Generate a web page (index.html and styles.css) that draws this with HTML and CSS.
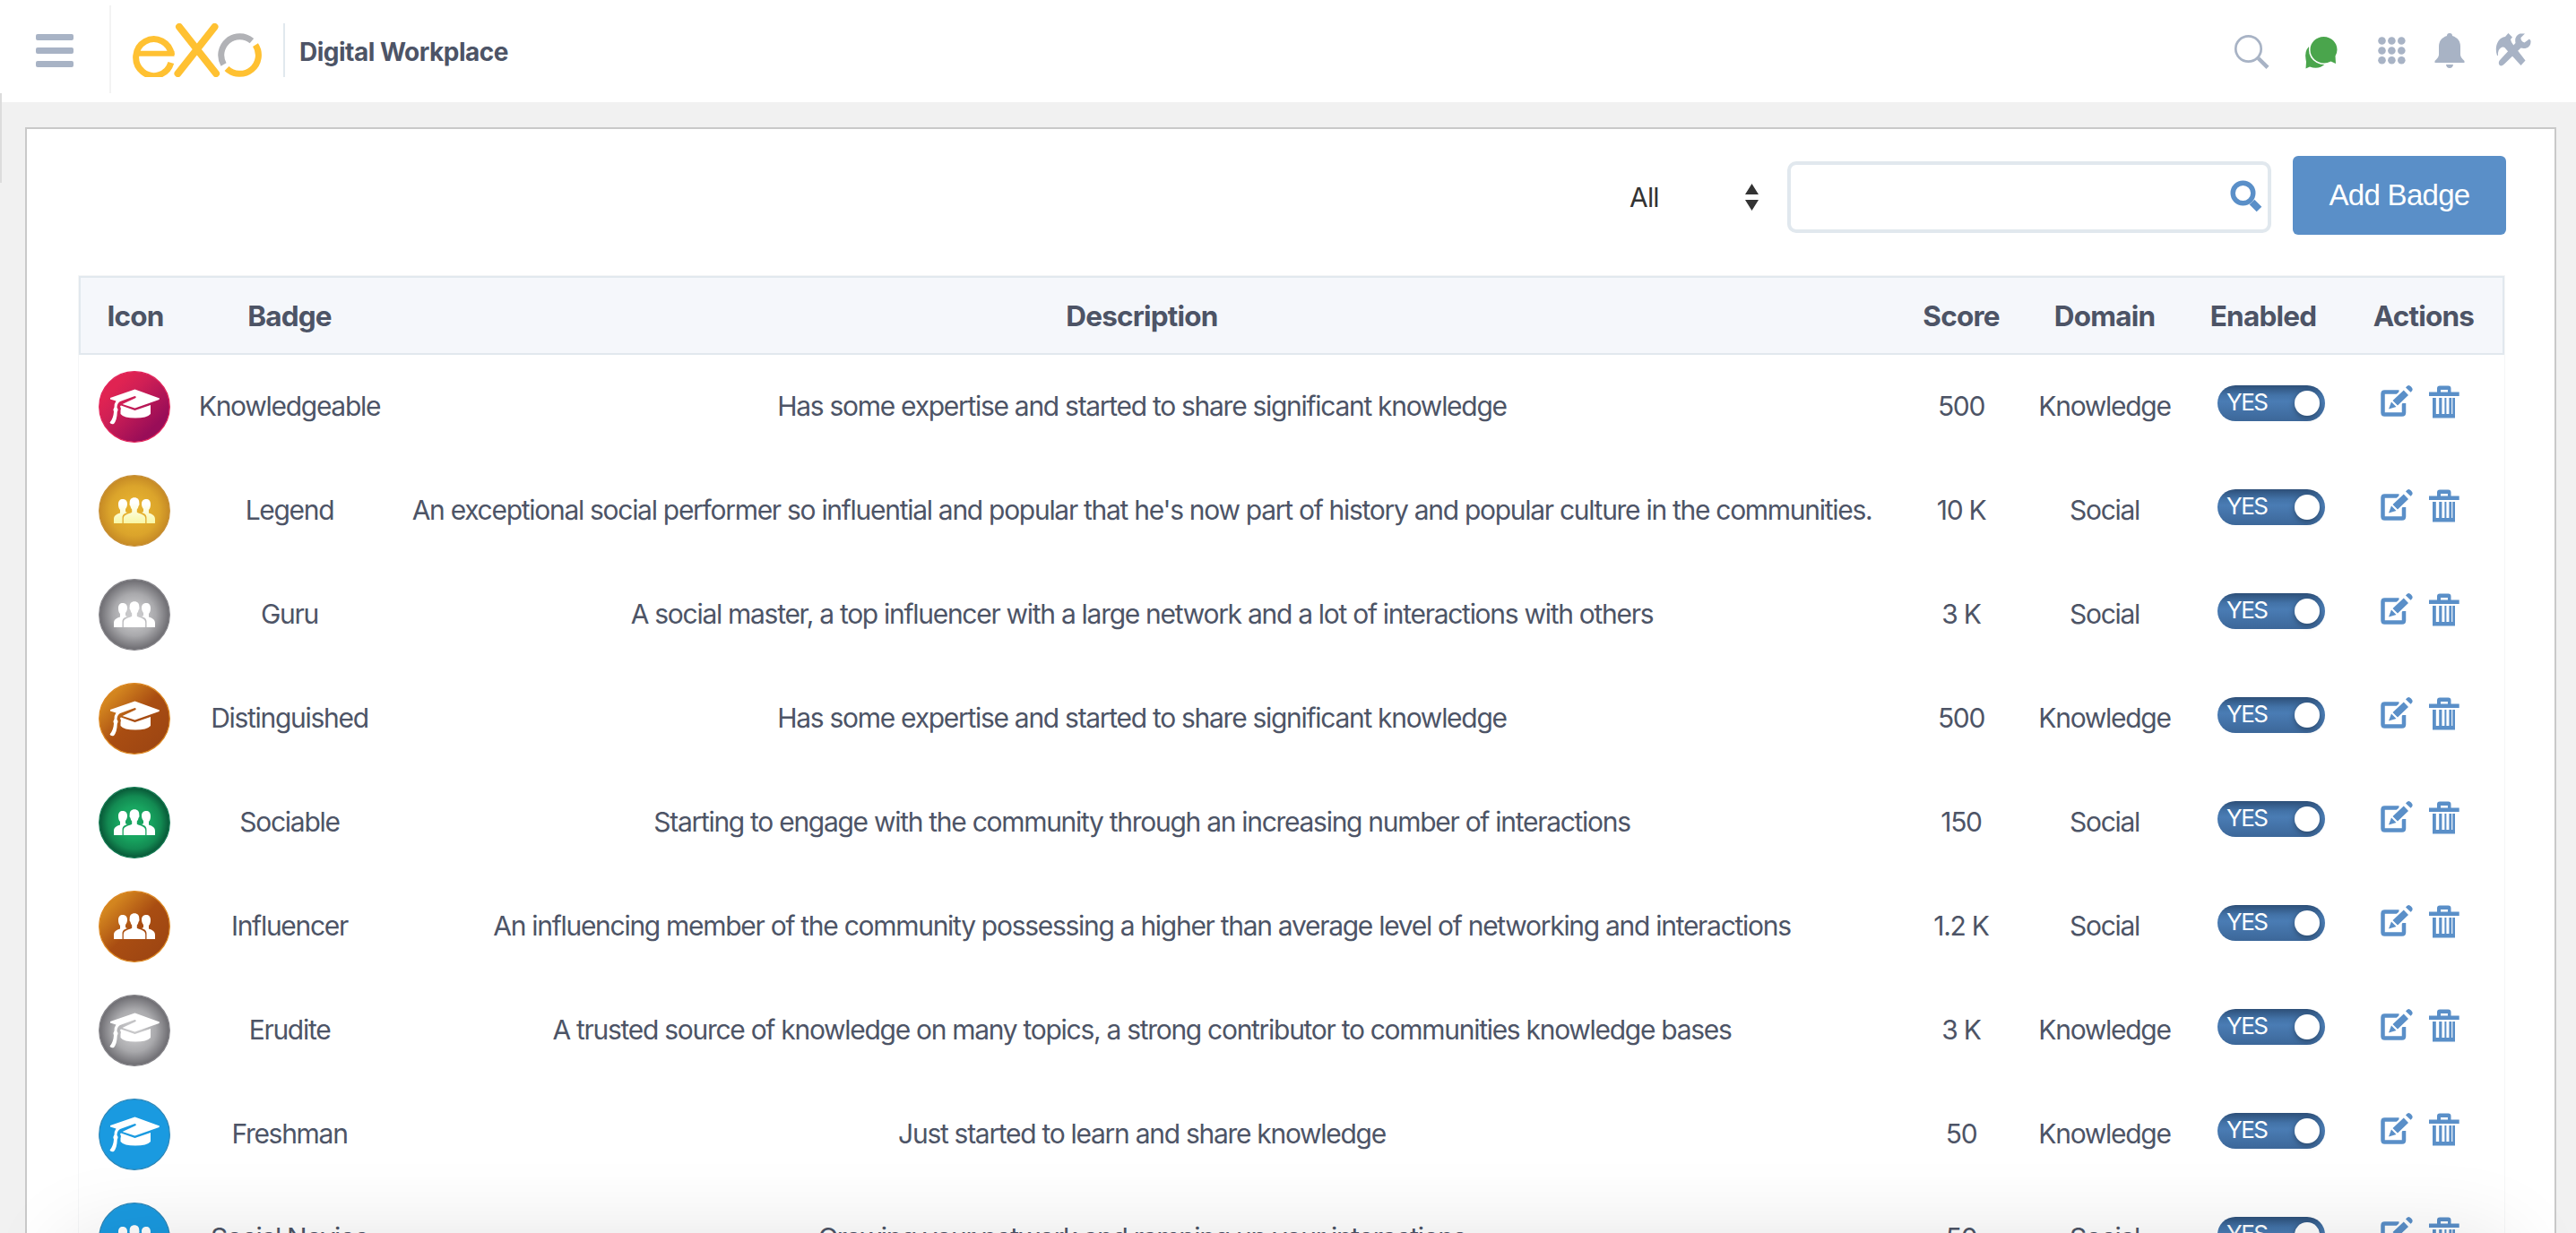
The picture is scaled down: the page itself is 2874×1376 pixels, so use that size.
FILE: index.html
```html
<!DOCTYPE html>
<html lang="en">
<head>
<meta charset="utf-8">
<title>Digital Workplace</title>
<link rel="stylesheet" href="styles.css">
</head>
<body>
<svg class="defs" width="0" height="0" aria-hidden="true">
  <defs>
    <linearGradient id="g-red" x1="0.15" y1="0.15" x2="0.85" y2="0.85"><stop offset="0.1" stop-color="#e02352"/><stop offset="0.35" stop-color="#cf1f55"/><stop offset="0.9" stop-color="#990d58"/></linearGradient>
    <linearGradient id="g-brown" x1="0.15" y1="0.15" x2="0.85" y2="0.85"><stop offset="0.05" stop-color="#d3851f"/><stop offset="0.5" stop-color="#a94d12"/><stop offset="1" stop-color="#9e4612"/></linearGradient>
    <radialGradient id="g-gold"><stop offset="0.3" stop-color="#e5b02f"/><stop offset="0.7" stop-color="#dba42b"/><stop offset="1" stop-color="#c68a25"/></radialGradient>
    <radialGradient id="g-grey"><stop offset="0.2" stop-color="#c8c8ca"/><stop offset="0.6" stop-color="#a9a9ac"/><stop offset="1" stop-color="#6c6b70"/></radialGradient>
    <radialGradient id="g-green"><stop offset="0.45" stop-color="#18a560"/><stop offset="0.75" stop-color="#138a52"/><stop offset="1" stop-color="#085737"/></radialGradient>
    <linearGradient id="g-cream" x1="0" y1="0" x2="0" y2="1"><stop offset="0.2" stop-color="#ffffff"/><stop offset="1" stop-color="#f8f7a4"/></linearGradient>
    <symbol id="cap" viewBox="0 0 80 80">
      <path d="M40.500 20.500 68 30.500 67.500 32 40.500 41.500 26.500 37 41.500 30Q42.500 28.500 40.500 28L24 34Q20.500 36 20.500 41Q22.500 43 20.800 45.500Q20.500 55 17 59Q13.500 60 12.500 57.500Q16.500 53 17 45.500Q15.500 43 17.500 40.500Q17.500 36 19.500 33.500L13 31.500V30Z"/>
      <path d="M25 38.500 40.500 44 58 38V48Q54 52.500 41 52.500Q28 52.500 24.500 48V44Q25.500 42 24 39.500Z"/>
    </symbol>
    <symbol id="people" viewBox="0 0 80 80">
      <path d="M27 27c3.200 0 5 2.200 5 5.200 0 3-1 4.400-2 5.800v3l1.800 1c-2.400 1.200-5.300 1.800-5.300 6v6H17v-4.500c0-4.500 3-5.500 7-7V39c-1.500-1.500-2-3.500-2-6.500 0-3.500 1.800-5.500 5-5.500Z"/>
      <path d="M53 27c-3.200 0-5 2.200-5 5.200 0 3 1 4.400 2 5.800v3l-1.800 1c2.400 1.200 5.300 1.800 5.300 6v6H63v-4.500c0-4.500-3-5.500-7-7V39c1.500-1.500 2-3.500 2-6.500 0-3.500-1.800-5.500-5-5.500Z"/>
      <path d="M40 25.200c3.500 0 5.500 2.300 5.300 6 .5 1.800-.1 3-.8 3.600-.3 1.800-.9 2.900-1.700 3.800v3.200c3.700 2.200 9.200 2 9.400 7V54H27.800v-5.200c.2-5 5.700-4.800 9.400-7v-3.200c-.8-.9-1.400-2-1.700-3.800-.7-.6-1.300-1.800-.8-3.600-.2-3.700 1.800-6 5.300-6Z"/>
    </symbol>
    <symbol id="edit" viewBox="0 0 40 40">
      <path class="edge" d="M22.500 9.500H6.500q-2 0-2 2v21q0 2 2 2h19.500q2 0 2-2V22"/>
      <path class="pencil" d="M11 29l2-9.500L27.500 6.200 34.700 12.600 20.500 26.500Z"/>
      <path d="M11 28.500 14 20.500 19.500 25.900ZM15.500 19 27.800 7.500 33 12.900 21 24.500ZM30 4.500Q32.800 0 36 3.500 39.600 7 35.500 9.800Z"/>
    </symbol>
    <symbol id="trash" viewBox="0 0 36 40">
      <path d="M1 9.500H10V5.500Q10 2.500 13 2.500H22.500Q25.500 2.500 25.500 5.500V9.500H34.700V14H1ZM14 7V9.500H22V7Z" fill-rule="evenodd"/>
      <path d="M5 16H8.800V34H12.200V16H15.400V34H18.400V16H20.400V34H23.400V16H26.200V34H27.300V16H30V38.500H5Z"/>
    </symbol>
  </defs>
</svg>

<header class="topbar">
  <button class="burger" aria-label="Menu"><span></span><span></span><span></span></button>
  <div class="brand">
    <svg class="logo" viewBox="0 0 144 60" width="144" height="60" aria-label="eXo">
      <g fill="none" stroke="#ffc132" stroke-width="7">
        <path d="M3 33.700H46.500" stroke-width="6"/>
        <path d="M43.500 35.500A20 20.500 0 1 0 42.800 44" />
        <path d="M52 4 93 56M91.500 4 50.500 56" stroke-width="8" stroke-linecap="round"/>
        <path d="M137 24.200A20.800 20.800 0 0 1 105 50.400"/>
      </g>
      <path d="M132.900 19.600A20.800 20.800 0 0 0 101.500 45.900" fill="none" stroke="#b1b2b6" stroke-width="7"/>
    </svg>
    <h1 class="site-name">Digital Workplace</h1>
  </div>
  <nav class="tools">
    <svg class="tool" width="40" height="40" viewBox="0 0 40 40"><circle cx="16.500" cy="16.500" r="14.200" fill="none" stroke="#a8b3c5" stroke-width="2.700"/><path d="M27.500 27 38 37.300" stroke="#a8b3c5" stroke-width="4.500"/></svg>
    <svg class="tool chat" width="38" height="38" viewBox="0 0 38 38"><path d="M5 12Q0 17 1.500 26L2 29 1.500 36.500 6 34.500Q16 38 23 31.500 7 32 5 12Z"/><path class="bubble" d="M21.500 1C30 1 36.500 7.500 36.500 15.500Q36.500 19 34.500 22.500L35 31 29.500 28.500C19 34 6.500 27 6.500 15.500 6.500 7.500 13 1 21.500 1Z"/></svg>
    <svg class="tool apps" width="31" height="31" viewBox="0 0 31 31"><circle cx="4.500" cy="4.500" r="4.300"/><circle cx="15.400" cy="4.500" r="4.300"/><circle cx="26.300" cy="4.500" r="4.300"/><circle cx="4.500" cy="15.500" r="4.300"/><circle cx="15.400" cy="15.500" r="4.300"/><circle cx="26.300" cy="15.500" r="4.300"/><circle cx="4.500" cy="26.300" r="4.300"/><circle cx="15.400" cy="26.300" r="4.300"/><circle cx="26.300" cy="26.300" r="4.300"/></svg>
    <svg class="tool bell" width="34" height="40" viewBox="0 0 34 40"><path d="M14 4Q14 1 17 1T20 4C26 6 29 10 29 16V25Q29 28 33.500 32V34H.5V32Q5 28 5 25V16C5 10 8 6 14 4ZM13 36H21Q20.500 40 17 40T13 36Z"/></svg>
    <svg class="tool wrench" width="40" height="37" viewBox="0 0 40 37"><path d="M2 25C-1.500 15 3 5 11 4L14.500 0 19 4.500 17 7Q17.500 10 20 13L33.500 30.500 28.500 36 12 18Q9.500 14 6 16.500 2.500 19 3 25Z"/><path d="M22.500 11Q21 3 27.500 .5L33 .5 28.500 5Q28 9 32.500 10.500L38 6.500 39.500 8.500C40 15 35 18 28.500 16.500L10.500 34Q7 38 4.500 35.500 2.500 32 6 29Z"/></svg>
  </nav>
</header>

<main class="panel">
  <form class="filters">
    <div class="select"><span>All</span><svg width="15" height="30" viewBox="0 0 15 30"><path d="M7.500 0 15 12H0ZM0 18H15L7.500 30Z" fill="#333"/></svg></div>
    <div class="search"><svg width="36" height="36" viewBox="0 0 36 36"><circle cx="14.500" cy="14.500" r="11.300" fill="none" stroke="#5a8fc8" stroke-width="5.400"/><path d="M24.500 24.500 32.500 32.500" stroke="#5a8fc8" stroke-width="8"/></svg></div>
    <button type="button" class="add">Add Badge</button>
  </form>
  <table class="badges">
    <colgroup><col class="c-icon"><col class="c-badge"><col class="c-desc"><col class="c-score"><col class="c-domain"><col class="c-enabled"><col class="c-actions"></colgroup>
    <thead><tr><th>Icon</th><th>Badge</th><th>Description</th><th>Score</th><th>Domain</th><th>Enabled</th><th>Actions</th></tr></thead>
    <tbody id="rows"></tbody>
  </table>
</main>
<div class="bottom-shade"></div>
<script src="badges.js"></script>
</body>
</html>
```
FILE: styles.css
```css
* { box-sizing: border-box; }
html, body { height: 100%; overflow: hidden; }
body {
  margin: 0;
  background: #f1f1f1;
  color: #4d5466;
  font-family: Inter, "Liberation Sans", sans-serif;
  font-size: 30px;
  position: relative;
}
body::before {
  content: "";
  position: absolute;
  left: 0;
  top: 104px;
  width: 2px;
  height: 100px;
  background: #dcdcdc;
}
.defs { position: absolute; }
button { font: inherit; border: 0; padding: 0; }

.topbar { display: flex; height: 114px; background: #fff; padding-right: 50px; }
.burger {
  width: 124px;
  height: 98px;
  margin-top: 6px;
  padding: 32px 0 0 40px;
  background: none;
  border-right: 2px solid #f3f3f3;
  display: flex;
  flex-direction: column;
  gap: 8px;
}
.burger span { display: block; width: 42px; height: 7px; border-radius: 2px; background: #a8b3c5; }
.brand { display: flex; height: 60px; margin: 26px 0 0 24px; }
.logo { display: block; }
.site-name {
  margin: 0 0 0 24px;
  padding-left: 16px;
  border-left: 2px solid #e1e8ee;
  font-size: 28px;
  line-height: 64px;
  font-weight: 700;
  letter-spacing: -0.5px;
  white-space: nowrap;
}
.tools { display: flex; margin-left: auto; padding-top: 36px; fill: #a8b3c5; }
.tool { display: block; margin-top: 2px; }
.chat { margin: 4px 0 0 39px; fill: #4aa54c; }
.bubble { stroke: #fff; stroke-width: 3; paint-order: stroke; }
.apps { margin: 5px 0 0 44px; }
.bell { margin: 0 0 0 32px; }
.wrench { margin: 1px 0 0 34px; }

.panel {
  margin: 28px 22px 0 28px;
  height: 1234px;
  overflow: hidden;
  border: 2px solid #c9c9c9;
  border-bottom: 0;
  background: #fff;
  padding: 30px 54px 0 58px;
}
.filters { display: flex; height: 88px; justify-content: flex-end; align-items: center; }
.select { display: flex; width: 144px; justify-content: space-between; align-items: center; margin: 4px 32px 0 0; color: #333; letter-spacing: -0.8px; }
.search { width: 540px; height: 80px; margin: 4px 24px 0 0; padding: 0 6px 2px 0; border: 4px solid #e1e8ee; border-radius: 10px; display: flex; justify-content: flex-end; align-items: center; }
.add { width: 238px; height: 88px; padding-bottom: 1px; border-radius: 6px; background: #5a8fc8; color: #fff; font-family: "Liberation Sans", Arial, sans-serif; font-size: 33px; letter-spacing: -0.7px; }

.badges {
  width: 2706px;
  margin-top: 46px;
  table-layout: fixed;
  border-collapse: separate;
  border-spacing: 0;
  text-align: center;
  box-shadow: 0 0 0 1px #f5f6f7;
}
.c-icon { width: 124px; }
.c-badge { width: 222px; }
.c-desc { width: 1680px; }
.c-score { width: 148px; }
.c-domain { width: 172px; }
.c-enabled { width: 182px; }
.c-actions { width: 178px; }
th { height: 88px; padding: 0; background: #f5f7fb; border: solid #e1e8ee; border-width: 2px 0; font-size: 31.5px; font-weight: 700; letter-spacing: -0.8px; }
th:first-child { border-left-width: 2px; }
th:last-child { border-right-width: 2px; }
td { height: 116px; padding: 0 0 3px; white-space: nowrap; letter-spacing: -1.29px; }
.medal { display: block; margin: 3px auto 0; width: 80px; height: 80px; }
.switch {
  display: flex;
  width: 120px;
  height: 40px;
  margin: 0 0 5px 40px;
  padding: 0 6px 0 10px;
  align-items: center;
  justify-content: space-between;
  border-radius: 20px;
  background: linear-gradient(#2d4f78, #4373a8 28%, #4a7cb4 45%, #3c6799);
  color: #fff;
  font-size: 26px;
  letter-spacing: -1.5px;
}
.switch span { margin-top: -4px; }
.switch i { width: 28px; height: 28px; border-radius: 50%; background: #fff; box-shadow: 0 2px 6px rgba(0,0,0,.35); }
.actions { display: flex; justify-content: center; gap: 15px; padding-right: 12px; margin-bottom: 10px; fill: #5a8fc8; }
.edge { fill: none; stroke: #5a8fc8; stroke-width: 4.5; }
.pencil { fill: #fff; stroke: #fff; stroke-width: 2; }
.bottom-shade {
  position: absolute;
  left: 80px;
  right: 80px;
  top: 1390px;
  height: 100px;
  box-shadow: 0 0 100px rgba(0,0,0,.14);
}
```
FILE: badges.js
```js
const rows = [
  ["cap", "url(#g-red)", "#e2245a", "Knowledgeable", "Has some expertise and started to share significant knowledge", "500", "Knowledge"],
  ["people", "url(#g-gold)", "#c78f35", "Legend", "An exceptional social performer so influential and popular that he's now part of history and popular culture in the communities.", "10 K", "Social"],
  ["people", "url(#g-grey)", "#858489", "Guru", "A social master, a top influencer with a large network and a lot of interactions with others", "3 K", "Social"],
  ["cap", "url(#g-brown)", "#dc861f", "Distinguished", "Has some expertise and started to share significant knowledge", "500", "Knowledge"],
  ["people", "url(#g-green)", "#137a52", "Sociable", "Starting to engage with the community through an increasing number of interactions", "150", "Social"],
  ["people", "url(#g-brown)", "#dc861f", "Influencer", "An influencing member of the community possessing a higher than average level of networking and interactions", "1.2 K", "Social"],
  ["cap", "url(#g-grey)", "#858489", "Erudite", "A trusted source of knowledge on many topics, a strong contributor to communities knowledge bases", "3 K", "Knowledge"],
  ["cap", "#1a9ae0", "#2b86b8", "Freshman", "Just started to learn and share knowledge", "50", "Knowledge"],
  ["people", "#1a9ae0", "#2b86b8", "Social Novice", "Growing your network and ramping up your interactions", "50", "Social"]
];
document.getElementById("rows").innerHTML = rows.map(([icon, fill, rim, name, text, score, domain]) => `
  <tr>
    <td><svg class="medal" viewBox="0 0 80 80"><circle cx="40" cy="40" r="39.300" fill="${fill}" stroke="${rim}" stroke-width="1.200"/><use href="#${icon}" width="80" height="80" fill="${name === "Legend" ? "url(#g-cream)" : "#fff"}"/></svg></td>
    <td>${name}</td><td>${text}</td><td>${score}</td><td>${domain}</td>
    <td><div class="switch"><span>YES</span><i></i></div></td>
    <td><div class="actions"><svg width="40" height="40"><use href="#edit"/></svg><svg width="36" height="40"><use href="#trash"/></svg></div></td>
  </tr>`).join("");
```
